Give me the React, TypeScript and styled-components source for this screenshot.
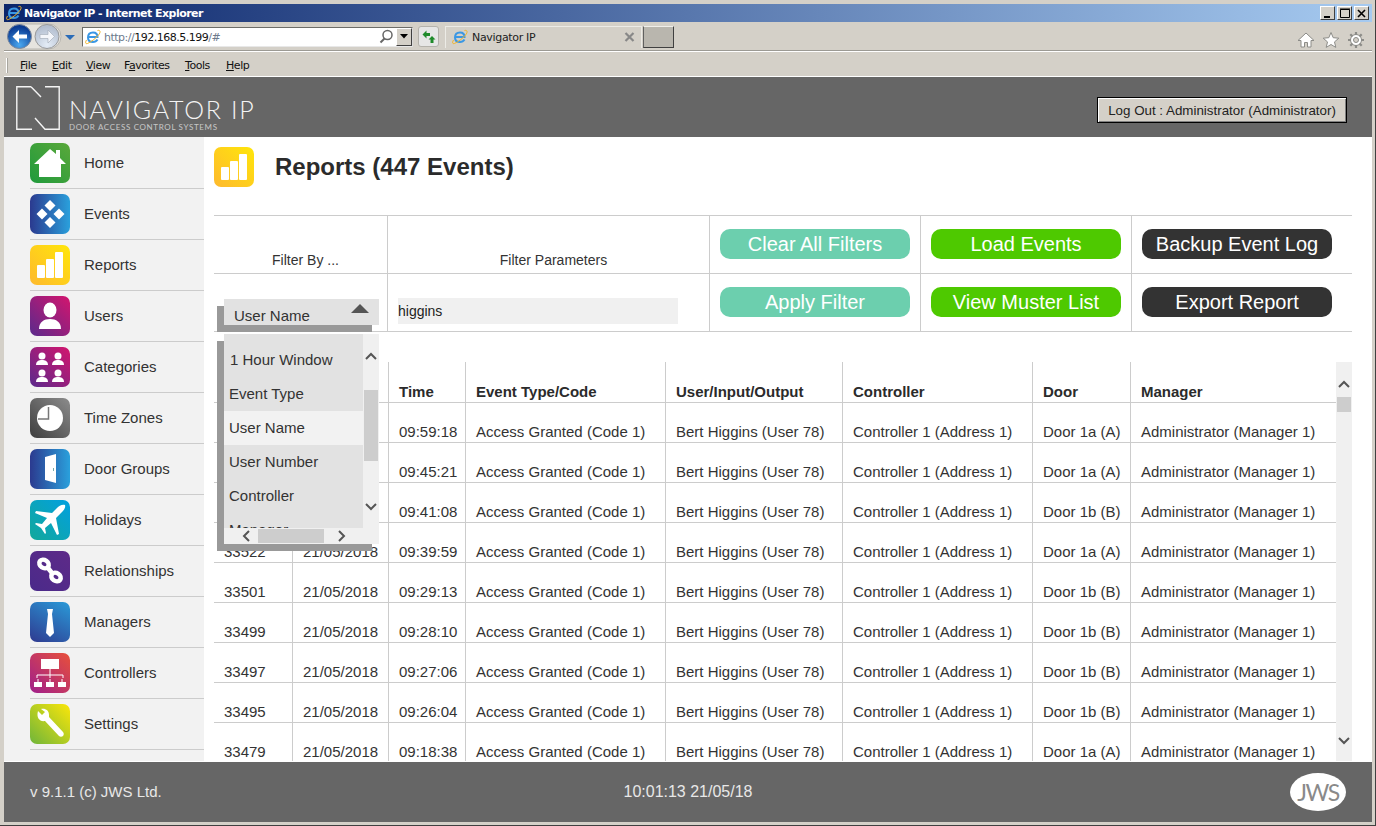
import styled, { createGlobalStyle } from "styled-components";

const GlobalStyle = createGlobalStyle`
  html, body { margin: 0; padding: 0; background: #d4d0c8; overflow: hidden; }
  * { box-sizing: border-box; }
`;

type NavName =
  | "Home" | "Events" | "Reports" | "Users" | "Categories" | "Time Zones"
  | "Door Groups" | "Holidays" | "Relationships" | "Managers" | "Controllers" | "Settings";

const navBackgrounds: { [k in NavName]: string } = {
  Home: "linear-gradient(45deg, #1f9a3c, #5aa83a)",
  Events: "linear-gradient(90deg, #2b3a8f, #2aa0dc)",
  Reports: "linear-gradient(45deg, #feb92e, #ffe60a)",
  Users: "linear-gradient(45deg, #5a2a8c, #d4156e)",
  Categories: "linear-gradient(45deg, #5a2a8c, #d4156e)",
  "Time Zones": "linear-gradient(45deg, #3e3e3e, #8c8c8c)",
  "Door Groups": "linear-gradient(90deg, #2b3a8f, #2aa0dc)",
  Holidays: "linear-gradient(45deg, #12a89a, #02a0e0)",
  Relationships: "linear-gradient(45deg, #4a2a8a, #5e2a88)",
  Managers: "linear-gradient(30deg, #2f3a90, #2a9ad8)",
  Controllers: "linear-gradient(45deg, #a01f8c, #e8503a)",
  Settings: "linear-gradient(45deg, #6fb53a, #fbe60a)",
};

const navItems: NavName[] = [
  "Home", "Events", "Reports", "Users", "Categories", "Time Zones",
  "Door Groups", "Holidays", "Relationships", "Managers", "Controllers", "Settings",
];

function NavGlyph({ name }: { name: NavName }) {
  switch (name) {
    case "Home":
      return <path d="M20 6 L26 11 V7 H30 V15 L36 21 H31 V34 H9 V21 H4 Z" fill="#fff" />;
    case "Events":
      return (
        <g fill="#fff">
          <path d="M20 6 L25.5 11.5 L20 17 L14.5 11.5 Z" />
          <path d="M12 14.5 L17.5 20 L12 25.5 L6.5 20 Z" />
          <path d="M29 14.5 L34.5 20 L29 25.5 L23.5 20 Z" />
          <path d="M20 23 L25.5 28.5 L20 34 L14.5 28.5 Z" />
        </g>
      );
    case "Reports":
      return (
        <g fill="#fff">
          <rect x="7" y="20" width="8" height="13" rx="1" />
          <rect x="16" y="14" width="8" height="19" rx="1" />
          <rect x="25" y="7" width="8" height="26" rx="1" />
        </g>
      );
    case "Users":
      return (
        <g fill="#fff">
          <ellipse cx="20" cy="14" rx="6.5" ry="7.5" />
          <path d="M9 33 C9 26 14 23 20 23 C26 23 31 26 31 33 Z" />
        </g>
      );
    case "Categories":
      return (
        <g fill="#fff">
          {[[12, 5], [28, 5], [12, 22], [28, 22]].map(([x, y]) => (
            <g key={`${x}-${y}`}>
              <circle cx={x} cy={y + 4} r="3.5" />
              <path d={`M${x - 6} ${y + 13} C${x - 6} ${y + 9} ${x - 3} ${y + 8} ${x} ${y + 8} C${x + 3} ${y + 8} ${x + 6} ${y + 9} ${x + 6} ${y + 13} Z`} />
            </g>
          ))}
        </g>
      );
    case "Time Zones":
      return (
        <g>
          <circle cx="20" cy="20" r="13" fill="#fff" />
          <path d="M18.5 9 V21 H8" fill="none" stroke="#777" strokeWidth="1.5" />
        </g>
      );
    case "Door Groups":
      return (
        <g>
          <path d="M15 8 L26 5 V34 L15 31 Z" fill="#fff" />
          <rect x="23" y="19" width="1" height="3" fill="#7aa" />
        </g>
      );
    case "Holidays":
      return (
        <path
          d="M35 5 C32 4 29 6 27 8 L22 13 L6 11 L5 13 L17 18 L12 24 L6 23 L5 24 L11 28 L15 34 L16 33 L15 28 L21 23 L27 35 L29 34 L26 18 L31 13 C33 11 36 8 35 5 Z"
          fill="#fff"
        />
      );
    case "Relationships":
      return (
        <g fill="none" stroke="#fff" strokeWidth="4.5" strokeLinecap="round">
          <ellipse cx="14" cy="13" rx="5" ry="4" transform="rotate(35 14 13)" />
          <ellipse cx="26" cy="26" rx="5" ry="4" transform="rotate(35 26 26)" />
          <path d="M18 17 L22 22" />
        </g>
      );
    case "Managers":
      return <path d="M17 7 H23 L22 12 L24 31 L20 35 L16 31 L18 12 Z" fill="#fff" />;
    case "Controllers":
      return (
        <g>
          <rect x="11" y="6" width="18" height="10" fill="#fff" />
          <path d="M20 16 V25 M7 25 V22 H33 V25" stroke="#fff" strokeWidth="1" fill="none" />
          <rect x="4" y="29" width="8" height="5" fill="#fff" />
          <rect x="16" y="29" width="8" height="5" fill="#fff" />
          <rect x="28" y="29" width="8" height="5" fill="#fff" />
          <path d="M8 26 V29 M20 26 V29 M32 26 V29" stroke="#fff" strokeWidth="1" />
        </g>
      );
    case "Settings":
      return (
        <path
          d="M8 7 L12 11 L15 8 L11 5 C15 4 19 6 19 11 L19 13 L33 28 C34 29 34 31 33 32 C32 33 30 33 29 32 L15 17 C10 18 6 14 8 7 Z"
          fill="#fff"
        />
      );
  }
}

const Page = styled.div`
  width: 1376px;
  height: 826px;
  display: flex;
  flex-direction: column;
  padding: 4px 3px 3px 4px;
  background: #d4d0c8;
  border-right: 1px solid #404040;
  border-bottom: 1px solid #404040;
  font-family: "Liberation Sans", Arial, sans-serif;
  color: #333;
  overflow: hidden;
`;

const TitleBar = styled.div`
  height: 18px;
  flex: none;
  display: flex;
  align-items: center;
  padding: 0 3px 0 2px;
  background: linear-gradient(90deg, #0a246a, #a6caf0);
  color: #fff;
  font: bold 11px "DejaVu Sans", Tahoma, sans-serif;
`;

const TitleText = styled.span`
  margin-left: 2px;
  flex: 1;
  letter-spacing: -0.53px;
`;

const WindowButtons = styled.div`
  display: flex;
  gap: 2px;
`;

const WindowButton = styled.div`
  width: 15px;
  height: 14px;
  background: #d4d0c8;
  border: 1px solid;
  border-color: #fff #404040 #404040 #fff;
  color: #000;
  display: flex;
  align-items: center;
  justify-content: center;
`;

const Toolbar = styled.div`
  height: 30px;
  flex: none;
  display: flex;
  align-items: center;
  padding-left: 3px;
  border-bottom: 1px solid #fff;
  box-shadow: inset 0 -1px 0 #9c9a94;
`;

const AddressBox = styled.div`
  width: 331px;
  height: 20px;
  margin-left: 5px;
  display: flex;
  align-items: center;
  background: #fff;
  border: 1px solid #6d6d68;
  border-right-color: #d8d8d8;
  border-bottom-color: #e8e8e8;
  font: 11px "DejaVu Sans", Tahoma, sans-serif;
  color: #6d7a8c;
  letter-spacing: -0.5px;
`;

const Url = styled.span`
  margin-left: 3px;
  padding-top: 1px;
  flex: 1;
  b { font-weight: normal; color: #111; }
`;

const AddressArrow = styled.div`
  width: 16px;
  height: 18px;
  background: #d4d0c8;
  border: 1px solid;
  border-color: #fff #404040 #404040 #fff;
  display: flex;
  align-items: center;
  justify-content: center;
`;

const RefreshButton = styled.div`
  width: 21px;
  height: 21px;
  margin-left: 5px;
  border: 1px solid #b4b2ac;
  border-radius: 3px;
  background: #e6e6e6;
  display: flex;
  align-items: center;
  justify-content: center;
`;

const BrowserTab = styled.div`
  width: 197px;
  height: 22px;
  margin-left: 6px;
  padding: 0 3px 0 6px;
  display: flex;
  align-items: center;
  gap: 4px;
  border: 1px solid #ecebe6;
  border-bottom: none;
  background: #d4d0c8;
  font: 11px "DejaVu Sans", Tahoma, sans-serif;
  color: #222;
  letter-spacing: -0.32px;
`;

const TabLabel = styled.span`
  flex: 1;
  padding-top: 1px;
`;

const NewTab = styled.div`
  width: 31px;
  height: 22px;
  margin-left: 1px;
  background: #b9b6ae;
  border: 1px solid;
  border-color: #f0efea #404040 #404040 #606060;
`;

const ToolIcons = styled.div`
  margin-left: auto;
  padding: 6px 7px 0 0;
  display: flex;
  align-items: center;
  gap: 7px;
`;

const MenuBar = styled.div`
  height: 25px;
  flex: none;
  display: flex;
  align-items: center;
  padding: 2px 0 0 2px;
  border-bottom: 1px solid #fff;
  font: 11px "DejaVu Sans", Tahoma, sans-serif;
  color: #111;
  letter-spacing: -0.45px;
`;

const Grip = styled.div`
  width: 2px;
  height: 15px;
  margin-right: 12px;
  background: #a8a69f;
  border-left: 1px solid #fff;
`;

const MenuItem = styled.span<{ $w: number }>`
  width: ${(p) => p.$w}px;
  u { text-decoration: underline; }
`;

const Header = styled.header`
  height: 60px;
  flex: none;
  display: flex;
  align-items: center;
  justify-content: space-between;
  padding: 0 25px 0 12px;
  background: #666;
`;

const Brand = styled.div`
  display: flex;
  align-items: center;
  gap: 9px;
  color: #f4f4f4;
`;

const LogoMark = styled.svg`
  flex: none;
  margin-top: 2px;
`;

const BrandText = styled.div`
  display: flex;
  flex-direction: column;
  padding-top: 14px;
`;

const BrandName = styled.div`
  font: 300 25px/25px Lato, "Open Sans", sans-serif;
  letter-spacing: 1.7px;
`;

const BrandSub = styled.div`
  font: 8px/10px Lato, "Open Sans", sans-serif;
  letter-spacing: 0.65px;
  color: #c8c8c8;
`;

const LogoutButton = styled.button`
  width: 250px;
  height: 26px;
  margin-top: 6px;
  padding: 0;
  background: #d4d0c8;
  border: 1px solid #000;
  box-shadow: inset 1px 1px 0 #fff, inset -1px -1px 0 #808080;
  font: 13.35px "Liberation Sans", Arial, sans-serif;
  color: #222;
`;

const Middle = styled.div`
  flex: 1;
  min-height: 0;
  display: flex;
`;

const Sidebar = styled.nav`
  width: 200px;
  flex: none;
  padding: 1px 0 0 26px;
  background: #f2f2f2;
`;

const NavRow = styled.div`
  height: 51px;
  display: flex;
  align-items: center;
  gap: 14px;
  border-bottom: 1px solid #ccc;
  font-size: 15px;
  color: #333;
`;

const NavLabel = styled.span`
  padding-bottom: 2px;
`;

const IconTile = styled.div<{ $bg: string }>`
  width: 40px;
  height: 40px;
  flex: none;
  border-radius: 7px;
  background: ${(p) => p.$bg};
  svg { display: block; }
`;

const Main = styled.main`
  flex: 1;
  min-width: 0;
  position: relative;
  padding: 10px 20px 0 10px;
  background: #fff;
  display: flex;
  flex-direction: column;
`;

const TitleRow = styled.div`
  height: 68px;
  flex: none;
  display: flex;
  gap: 21px;
  align-items: flex-start;
`;

const PageTitle = styled.h1`
  margin: 3px 0 0;
  font: bold 24px/34px "Liberation Sans", Arial, sans-serif;
  color: #2b2b2b;
`;

const FilterGrid = styled.div`
  flex: none;
  display: grid;
  grid-template-columns: 174px 322px 211px 211px 220px;
  grid-auto-rows: 58px;
  border-top: 1px solid #ccc;
`;

const FilterCell = styled.div<{ $last?: boolean }>`
  display: flex;
  align-items: center;
  justify-content: center;
  border-bottom: 1px solid #ccc;
  border-right: ${(p) => (p.$last ? "none" : "1px solid #ccc")};
`;

const FilterHead = styled(FilterCell)`
  align-items: flex-end;
  padding: 0 0 5px 10px;
  font-size: 14px;
`;

const ActionCell = styled(FilterCell)`
  justify-content: flex-start;
  padding: 0 0 1px 10px;
`;

const ParamInput = styled.div`
  width: 280px;
  height: 26px;
  margin-top: 17px;
  background: #f0f0f0;
  font-size: 14px;
  line-height: 26px;
  color: #222;
`;

const ActionButton = styled.button<{ $bg: string }>`
  width: 190px;
  height: 30px;
  padding: 0;
  border: none;
  border-radius: 10px;
  background: ${(p) => p.$bg};
  color: #fff;
  font: 20px "Liberation Sans", Arial, sans-serif;
`;

const EventsArea = styled.div`
  flex: 1;
  min-height: 0;
  margin-top: 30px;
  display: flex;
  overflow: hidden;
`;

const EventsTable = styled.table`
  width: 1122px;
  flex: none;
  align-self: flex-start;
  border-collapse: separate;
  border-spacing: 0;
  table-layout: fixed;
  font-size: 15px;
`;

const Th = styled.th`
  height: 41px;
  padding: 0 0 2px 10px;
  vertical-align: bottom;
  text-align: left;
  font-size: 15px;
  font-weight: bold;
  color: #2b2b2b;
  border-bottom: 1px solid #ccc;
  border-right: 1px solid #ccc;
  &:last-child { border-right: none; }
`;

const Td = styled.td`
  height: 40px;
  padding: 0 0 2px 10px;
  vertical-align: bottom;
  white-space: nowrap;
  border-bottom: 1px solid #ccc;
  border-right: 1px solid #ccc;
  &:last-child { border-right: none; }
`;

const VScroll = styled.div`
  width: 16px;
  flex: none;
  background: #f0f0f0;
  display: flex;
  flex-direction: column;
  align-items: center;
  padding-top: 18px;
`;

const VThumb = styled.div`
  width: 14px;
  height: 15px;
  margin-top: 8px;
  background: #cdcdcd;
`;

const ChevronBottom = styled.div`
  margin-top: auto;
  padding-bottom: 16px;
  display: flex;
`;

const SelectBox = styled.div`
  position: absolute;
  left: 20px;
  top: 162px;
  width: 155px;
  height: 26px;
  padding: 9px 0 0 10px;
  background: #e2e2e2;
  box-shadow: -7px 7px 0 #999;
  font-size: 15px;
  line-height: 16px;
`;

const SelectArrow = styled.div`
  position: absolute;
  right: 10px;
  top: 5px;
  width: 0;
  height: 0;
  border-left: 9px solid transparent;
  border-right: 9px solid transparent;
  border-bottom: 9px solid #555;
`;

const DropList = styled.div`
  position: absolute;
  left: 20px;
  top: 197px;
  width: 155px;
  height: 210px;
  background: #f0f0f0;
  box-shadow: -7px 7px 0 #999;
  display: grid;
  grid-template-columns: 139px 16px;
  grid-template-rows: 194px 16px;
`;

const DropItems = styled.div`
  background: #e2e2e2;
  padding-top: 9px;
  overflow: hidden;
`;

const DropItem = styled.div<{ $active?: boolean; $indent?: boolean }>`
  height: 34px;
  line-height: 34px;
  padding-left: ${(p) => (p.$indent ? 6 : 5)}px;
  background: ${(p) => (p.$active ? "#f2f2f2" : "transparent")};
  font-size: 15px;
  white-space: nowrap;
`;

const DropV = styled.div`
  display: flex;
  flex-direction: column;
  align-items: center;
  padding-top: 18px;
`;

const DropVThumb = styled.div`
  width: 14px;
  height: 71px;
  margin-top: 29px;
  background: #cdcdcd;
`;

const DropVDown = styled.div`
  margin-top: 41px;
  display: flex;
`;

const DropH = styled.div`
  grid-column: 1 / 3;
  display: flex;
  align-items: center;
  padding-left: 18px;
`;

const DropHThumb = styled.div`
  width: 66px;
  height: 14px;
  margin-left: 7px;
  background: #cdcdcd;
`;

const DropHRight = styled.div`
  margin-left: 13px;
  display: flex;
`;

const Footer = styled.footer`
  height: 61px;
  flex: none;
  display: grid;
  grid-template-columns: 1fr auto 1fr;
  align-items: center;
  padding: 0 26px;
  border-top: 1px solid #fff;
  background: #666;
  color: #e8e8e8;
`;

const Version = styled.div`
  font-size: 15px;
  padding-bottom: 1px;
`;

const Clock = styled.div`
  font-size: 16px;
  padding-bottom: 1px;
`;

const JwsBadge = styled.div`
  justify-self: end;
  width: 56px;
  height: 38px;
  border-radius: 50%;
  background: #fff;
  color: #8a8a8a;
  font: 400 23px/38px Lato, "Liberation Sans", sans-serif;
  letter-spacing: -1.5px;
  text-align: center;
`;

function Chevron({ dir, color = "#555" }: { dir: "up" | "down" | "left" | "right"; color?: string }) {
  const d = {
    up: "M1 7 L6 2 L11 7",
    down: "M1 2 L6 7 L11 2",
    left: "M7 1 L2 6 L7 11",
    right: "M2 1 L7 6 L2 11",
  }[dir];
  const size = dir === "up" || dir === "down" ? { width: 12, height: 9 } : { width: 9, height: 12 };
  return (
    <svg {...size} viewBox={`0 0 ${size.width} ${size.height}`} style={{ display: "block" }}>
      <path d={d} fill="none" stroke={color} strokeWidth="2" />
    </svg>
  );
}

function IeLogo({ size = 16 }: { size?: number }) {
  return (
    <svg width={size} height={size} viewBox="0 0 16 16" style={{ flex: "none", display: "block" }}>
      <path d="M3.5 8 H12.5 C12.5 5 10.5 3.5 8 3.5 C5 3.5 3 5.5 3 8.5 C3 11.5 5 13 8 13 C10 13 11.5 12.2 12.5 10.5" fill="none" stroke="#3a97e4" strokeWidth="2" />
      <path d="M12.5 1.5 C15 .8 15.8 2.5 14.3 5 C12 8.5 6 13 2.5 14.5 C.5 15.2 0 13.5 1.5 11" fill="none" stroke="#f0b429" strokeWidth="1" />
    </svg>
  );
}

function ReportsTile() {
  return (
    <IconTile $bg={navBackgrounds.Reports}>
      <svg width="40" height="40" viewBox="0 0 40 40"><NavGlyph name="Reports" /></svg>
    </IconTile>
  );
}

const rows: [string, string, string][] = [
  ["33547", "09:59:18", "Door 1a (A)"],
  ["33538", "09:45:21", "Door 1a (A)"],
  ["33529", "09:41:08", "Door 1b (B)"],
  ["33522", "09:39:59", "Door 1a (A)"],
  ["33501", "09:29:13", "Door 1b (B)"],
  ["33499", "09:28:10", "Door 1b (B)"],
  ["33497", "09:27:06", "Door 1b (B)"],
  ["33495", "09:26:04", "Door 1b (B)"],
  ["33479", "09:18:38", "Door 1a (A)"],
];

const columnWidths = [79, 96, 77, 200, 177, 190, 98, 205];
const headings = ["Event", "Date", "Time", "Event Type/Code", "User/Input/Output", "Controller", "Door", "Manager"];

export default function App() {
  return (
    <>
      <GlobalStyle />
      <Page>
        <TitleBar>
          <IeLogo />
          <TitleText>Navigator IP - Internet Explorer</TitleText>
          <WindowButtons>
            <WindowButton>
              <svg width="9" height="9"><rect x="1" y="7" width="6" height="2" fill="#000" /></svg>
            </WindowButton>
            <WindowButton>
              <svg width="10" height="10"><path d="M.5 1.5 H9.5 V9.5 H.5 Z M0 1 H10" fill="none" stroke="#000" /></svg>
            </WindowButton>
            <WindowButton>
              <svg width="9" height="9"><path d="M1 1 L8 8 M8 1 L1 8" stroke="#000" strokeWidth="1.6" /></svg>
            </WindowButton>
          </WindowButtons>
        </TitleBar>
        <Toolbar>
          <svg width="70" height="29" viewBox="0 0 70 29" style={{ flex: "none" }}>
            <defs>
              <radialGradient id="backBall" cx="50%" cy="85%" r="75%">
                <stop offset="0%" stopColor="#4aa8f0" />
                <stop offset="100%" stopColor="#0a3a92" />
              </radialGradient>
              <radialGradient id="fwdBall" cx="50%" cy="85%" r="75%">
                <stop offset="0%" stopColor="#e4ecf6" />
                <stop offset="100%" stopColor="#b4bfd0" />
              </radialGradient>
            </defs>
            <rect x="1" y="2" width="53" height="25" rx="12.5" fill="#e6e4df" stroke="#b8b6b0" />
            <circle cx="12.5" cy="14.5" r="12" fill="url(#backBall)" stroke="#7f8a9c" />
            <path d="M5.5 14.5 L12 8 V12.5 H20 V16.5 H12 V21 Z" fill="#fff" />
            <circle cx="40" cy="14.5" r="12" fill="url(#fwdBall)" stroke="#9a9a9a" />
            <path d="M47.5 14.5 L41 8 V12.5 H33 V16.5 H41 V21 Z" fill="#f4f6fa" stroke="#a8b0bc" strokeWidth=".7" />
            <path d="M58 13 H68 L63 18 Z" fill="#2b6cb8" />
          </svg>
          <AddressBox>
            <span style={{ marginLeft: 2, display: "flex" }}><IeLogo /></span>
            <Url>http://<b>192.168.5.199</b>/#</Url>
            <svg width="15" height="15" viewBox="0 0 15 15" style={{ marginRight: 2 }}>
              <circle cx="8.5" cy="6" r="4.5" fill="none" stroke="#666" strokeWidth="1.5" />
              <path d="M5.5 9.5 L1.5 13.5" stroke="#666" strokeWidth="2" />
            </svg>
            <AddressArrow>
              <svg width="8" height="5"><path d="M0 0 H8 L4 4.5 Z" fill="#000" /></svg>
            </AddressArrow>
          </AddressBox>
          <RefreshButton>
            <svg width="15" height="15" viewBox="0 0 15 15">
              <path d="M1.5 5.5 L5.5 1.5 V4 H9 V7 H5.5 V9.5 Z" fill="#1e8a2a" />
              <path d="M11 7 L14.5 10.5 H12.5 V14 H9.5 V10.5 H7.5 Z" fill="#1e8a2a" />
            </svg>
          </RefreshButton>
          <BrowserTab>
            <IeLogo />
            <TabLabel>Navigator IP</TabLabel>
            <svg width="16" height="12" viewBox="0 0 16 12">
              <path d="M3.5 2 L11.5 10 M11.5 2 L3.5 10" stroke="#888" strokeWidth="2.2" />
            </svg>
          </BrowserTab>
          <NewTab />
          <ToolIcons>
            <svg width="18" height="18" viewBox="0 0 18 18">
              <path d="M9 2 L17 9.5 H14 V16 H10.5 V11.5 H7.5 V16 H4 V9.5 H1 Z" fill="#fff" stroke="#8c8c88" />
            </svg>
            <svg width="18" height="18" viewBox="0 0 18 18">
              <path d="M9 1.5 L11.2 6.7 L16.8 7.2 L12.5 10.9 L13.8 16.4 L9 13.5 L4.2 16.4 L5.5 10.9 L1.2 7.2 L6.8 6.7 Z" fill="#fff" stroke="#8c8c88" />
            </svg>
            <svg width="18" height="18" viewBox="0 0 18 18">
              <circle cx="9" cy="9" r="5.5" fill="#fff" stroke="#8c8c88" strokeWidth="1" />
              <circle cx="9" cy="9" r="2.5" fill="#d4d0c8" stroke="#8c8c88" />
              <path d="M9 1 V4 M9 14 V17 M1 9 H4 M14 9 H17 M3.3 3.3 L5.4 5.4 M12.6 12.6 L14.7 14.7 M14.7 3.3 L12.6 5.4 M5.4 12.6 L3.3 14.7" stroke="#8c8c88" strokeWidth="2.2" />
            </svg>
          </ToolIcons>
        </Toolbar>
        <MenuBar>
          <Grip />
          <MenuItem $w={32}><u>F</u>ile</MenuItem>
          <MenuItem $w={34}><u>E</u>dit</MenuItem>
          <MenuItem $w={38}><u>V</u>iew</MenuItem>
          <MenuItem $w={61}>F<u>a</u>vorites</MenuItem>
          <MenuItem $w={41}><u>T</u>ools</MenuItem>
          <MenuItem $w={40}><u>H</u>elp</MenuItem>
        </MenuBar>
        <Header>
          <Brand>
            <LogoMark width="44" height="44" viewBox="0 0 44 44">
              <path d="M15 .8 H.8 V43.2 H16 M15 .8 L25 11 M29 .8 H43.2 V43.2 H29 L19 32" fill="none" stroke="#f4f4f4" strokeWidth="1.4" />
            </LogoMark>
            <BrandText>
              <BrandName>NAVIGATOR IP</BrandName>
              <BrandSub>DOOR ACCESS CONTROL SYSTEMS</BrandSub>
            </BrandText>
          </Brand>
          <LogoutButton>Log Out : Administrator (Administrator)</LogoutButton>
        </Header>
        <Middle>
          <Sidebar>
            {navItems.map((name) => (
              <NavRow key={name}>
                <IconTile $bg={navBackgrounds[name]}>
                  <svg width="40" height="40" viewBox="0 0 40 40"><NavGlyph name={name} /></svg>
                </IconTile>
                <NavLabel>{name}</NavLabel>
              </NavRow>
            ))}
          </Sidebar>
          <Main>
            <TitleRow>
              <ReportsTile />
              <PageTitle>Reports (447 Events)</PageTitle>
            </TitleRow>
            <FilterGrid>
              <FilterHead>Filter By ...</FilterHead>
              <FilterHead>Filter Parameters</FilterHead>
              <ActionCell><ActionButton $bg="#6ccfae">Clear All Filters</ActionButton></ActionCell>
              <ActionCell><ActionButton $bg="#4ec900">Load Events</ActionButton></ActionCell>
              <ActionCell $last><ActionButton $bg="#333">Backup Event Log</ActionButton></ActionCell>
              <FilterCell />
              <ActionCell><ParamInput>higgins</ParamInput></ActionCell>
              <ActionCell><ActionButton $bg="#6ccfae">Apply Filter</ActionButton></ActionCell>
              <ActionCell><ActionButton $bg="#4ec900">View Muster List</ActionButton></ActionCell>
              <ActionCell $last><ActionButton $bg="#333">Export Report</ActionButton></ActionCell>
            </FilterGrid>
            <EventsArea>
              <EventsTable>
                <colgroup>
                  {columnWidths.map((w, i) => <col key={i} width={w} />)}
                </colgroup>
                <thead>
                  <tr>{headings.map((h) => <Th key={h}>{h}</Th>)}</tr>
                </thead>
                <tbody>
                  {rows.map(([id, time, door]) => (
                    <tr key={id}>
                      <Td>{id}</Td>
                      <Td>21/05/2018</Td>
                      <Td>{time}</Td>
                      <Td>Access Granted (Code 1)</Td>
                      <Td>Bert Higgins (User 78)</Td>
                      <Td>Controller 1 (Address 1)</Td>
                      <Td>{door}</Td>
                      <Td>Administrator (Manager 1)</Td>
                    </tr>
                  ))}
                </tbody>
              </EventsTable>
              <VScroll>
                <Chevron dir="up" />
                <VThumb />
                <ChevronBottom><Chevron dir="down" /></ChevronBottom>
              </VScroll>
            </EventsArea>
            <SelectBox>
              User Name
              <SelectArrow />
            </SelectBox>
            <DropList>
              <DropItems>
                <DropItem $indent>1 Hour Window</DropItem>
                <DropItem>Event Type</DropItem>
                <DropItem $active>User Name</DropItem>
                <DropItem>User Number</DropItem>
                <DropItem>Controller</DropItem>
                <DropItem>Manager</DropItem>
              </DropItems>
              <DropV>
                <Chevron dir="up" />
                <DropVThumb />
                <DropVDown><Chevron dir="down" /></DropVDown>
              </DropV>
              <DropH>
                <Chevron dir="left" />
                <DropHThumb />
                <DropHRight><Chevron dir="right" /></DropHRight>
              </DropH>
            </DropList>
          </Main>
        </Middle>
        <Footer>
          <Version>v 9.1.1 (c) JWS Ltd.</Version>
          <Clock>10:01:13 21/05/18</Clock>
          <JwsBadge>JWS</JwsBadge>
        </Footer>
      </Page>
    </>
  );
}
